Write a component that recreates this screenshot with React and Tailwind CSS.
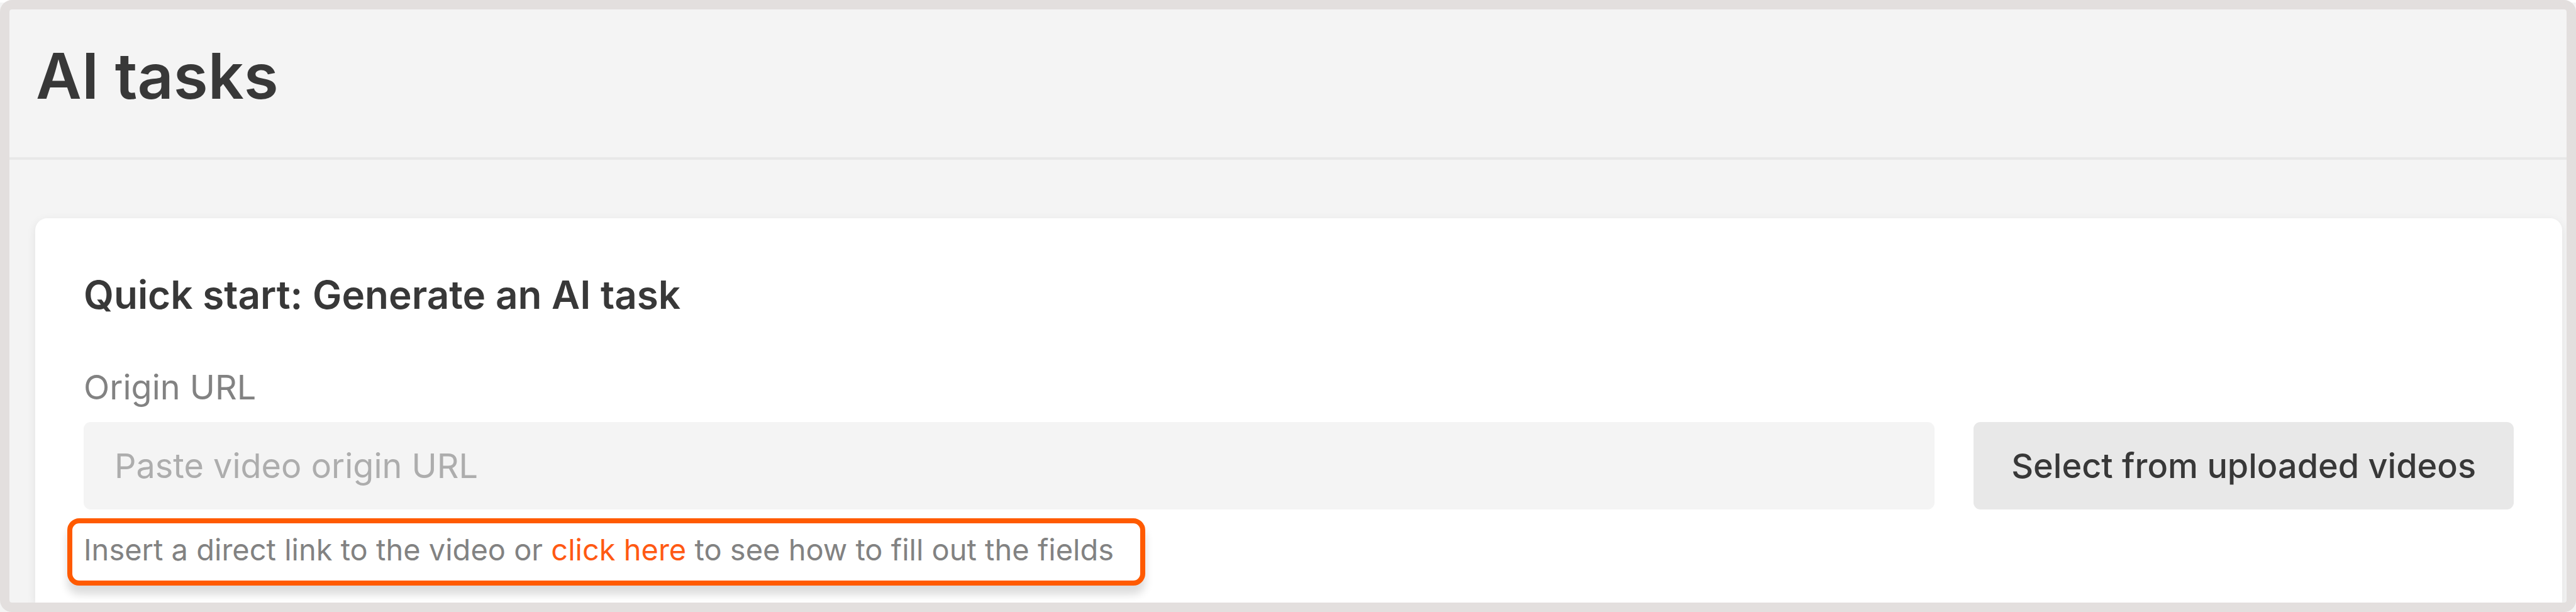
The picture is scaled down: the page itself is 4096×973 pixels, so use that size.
export default function App() {
  return (
    <div className="min-h-screen bg-[linear-gradient(to_bottom,#ffffff_4px,#f4f4f4_4px)] font-['Inter',sans-serif] flex flex-col">
      <div className="flex-1 flex flex-col overflow-hidden rounded-[19px] border-[15px] border-[#e3dfde] bg-[#f4f4f4]">
        <header className="border-b-4 border-[#e8e8e8] pl-[42px] pt-[46px] pb-[69px]">
          <h1 className="text-[100px] leading-[120px] font-semibold text-[#383838]">AI tasks</h1>
        </header>
        <main className="flex-1 flex flex-col pl-[41px] pr-[7px] pt-[93px]">
          <section className="flex-1 rounded-t-[19px] bg-white px-[77px] pt-[82px] pb-[27px] shadow-[0_4px_15px_rgba(0,0,0,0.08)]">
            <h2 className="text-[62px] leading-[80px] font-semibold text-[#383838]">Quick start: Generate an AI task</h2>
            <label htmlFor="origin-url" className="mt-[71px] block text-[54px] leading-[72px] text-[#828282]">Origin URL</label>
            <div className="mt-[19px] flex gap-[62px]">
              <input
                id="origin-url"
                type="url"
                placeholder="Paste video origin URL"
                className="h-[139px] min-w-0 flex-1 rounded-[11px] bg-[#f4f4f4] px-[49px] text-[54px] text-[#383838] outline-none placeholder:text-[#adadad]"
              />
              <button type="button" className="h-[139px] shrink-0 rounded-[11px] bg-[#e8e8e8] px-[60px] text-[54px] font-medium text-[#383838]">
                Select from uploaded videos
              </button>
            </div>
            <p className="mt-[14px] -ml-[26px] w-fit rounded-[19px] border-8 border-[#ff5a00] bg-white pl-[18px] pr-[42px] pt-[10px] pb-[18px] text-[47px] leading-[63px] text-[#828282] shadow-[0_14px_14px_rgba(0,0,0,0.14)]">
              Insert a direct link to the video or <a href="#fields" className="text-[#ff5913]">click here</a> to see how to fill out the fields
            </p>
          </section>
        </main>
      </div>
    </div>
  );
}
